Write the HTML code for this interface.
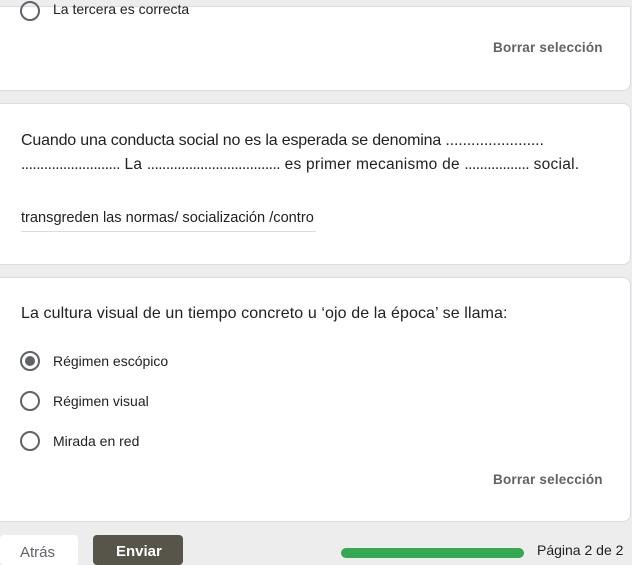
<!DOCTYPE html>
<html><head><style>
body{margin:0;width:632px;height:553px;overflow:hidden;background:#ededed;font-family:"Liberation Sans",sans-serif;color:#202124;position:relative}
.card{position:absolute;left:0;width:631px;background:#fff;border-radius:0 8px 8px 0;border:1px solid #dadce0;border-left:none;box-sizing:border-box}
.t{position:absolute;white-space:nowrap}
.q{font-size:15px;letter-spacing:-0.1px}
.opt{font-size:14px;left:53px}
.r{position:absolute;left:20px;width:16px;height:16px;border:2px solid #5f6368;border-radius:50%}
.r.s::after{content:"";position:absolute;left:3px;top:3px;width:10px;height:10px;border-radius:50%;background:#5f6368}
.b{font-size:13.5px;color:#5f6368;font-weight:bold;left:493px;letter-spacing:0.2px}
</style></head><body>
<div class="card" style="top:6px;height:85px;border-radius:0 0 8px 0">
  <div class="r" style="top:-6px"></div>
  <div class="t opt" style="top:-6px">La tercera es correcta</div>
  <div class="t b" style="top:33px">Borrar selección</div>
</div>
<div class="card" style="top:103px;height:162px">
  <div class="t q" style="left:21px;top:28px;font-size:16px;letter-spacing:-0.17px">Cuando una conducta social no es la esperada se denomina .......................</div>
  <div class="t q" style="left:21px;top:52px;font-size:15.5px;letter-spacing:0.25px"><span style="letter-spacing:-0.5px">..........................</span> La <span style="letter-spacing:-0.5px">...................................</span> es primer mecanismo de <span style="letter-spacing:-0.5px">.................</span> social.</div>
  <div class="t" style="left:21px;top:106px;font-size:14.6px">transgreden las normas/ socialización /contro</div>
  <div style="position:absolute;left:21px;top:127px;width:295px;height:1px;background:#dadce0"></div>
</div>
<div class="card" style="top:277px;height:245px">
  <div class="t q" style="left:21px;top:27px;font-size:16px;letter-spacing:0.1px">La cultura visual de un tiempo concreto u ‘ojo de la época’ se llama:</div>
  <div class="r s" style="top:73px"></div><div class="t opt" style="top:75px">Régimen escópico</div>
  <div class="r" style="top:113px"></div><div class="t opt" style="top:115px">Régimen visual</div>
  <div class="r" style="top:153px"></div><div class="t opt" style="top:155px">Mirada en red</div>
  <div class="t b" style="top:194px">Borrar selección</div>
</div>
<div style="position:absolute;left:0;top:535px;width:78px;height:30px;background:#fff;border-radius:4px"></div>
<div class="t" style="left:20px;top:544px;font-size:15px;color:#5f6368">Atrás</div>
<div style="position:absolute;left:93px;top:535px;width:90px;height:30px;background:#57544a;border-radius:4px"></div>
<div class="t" style="left:116px;top:543px;font-size:15px;color:#fff;font-weight:bold">Enviar</div>
<div style="position:absolute;left:341px;top:548px;width:183px;height:10px;background:#34a853;border-radius:5px"></div>
<div class="t" style="left:537px;top:542px;font-size:14px;color:#202124">Página 2 de 2</div>
</body></html>
